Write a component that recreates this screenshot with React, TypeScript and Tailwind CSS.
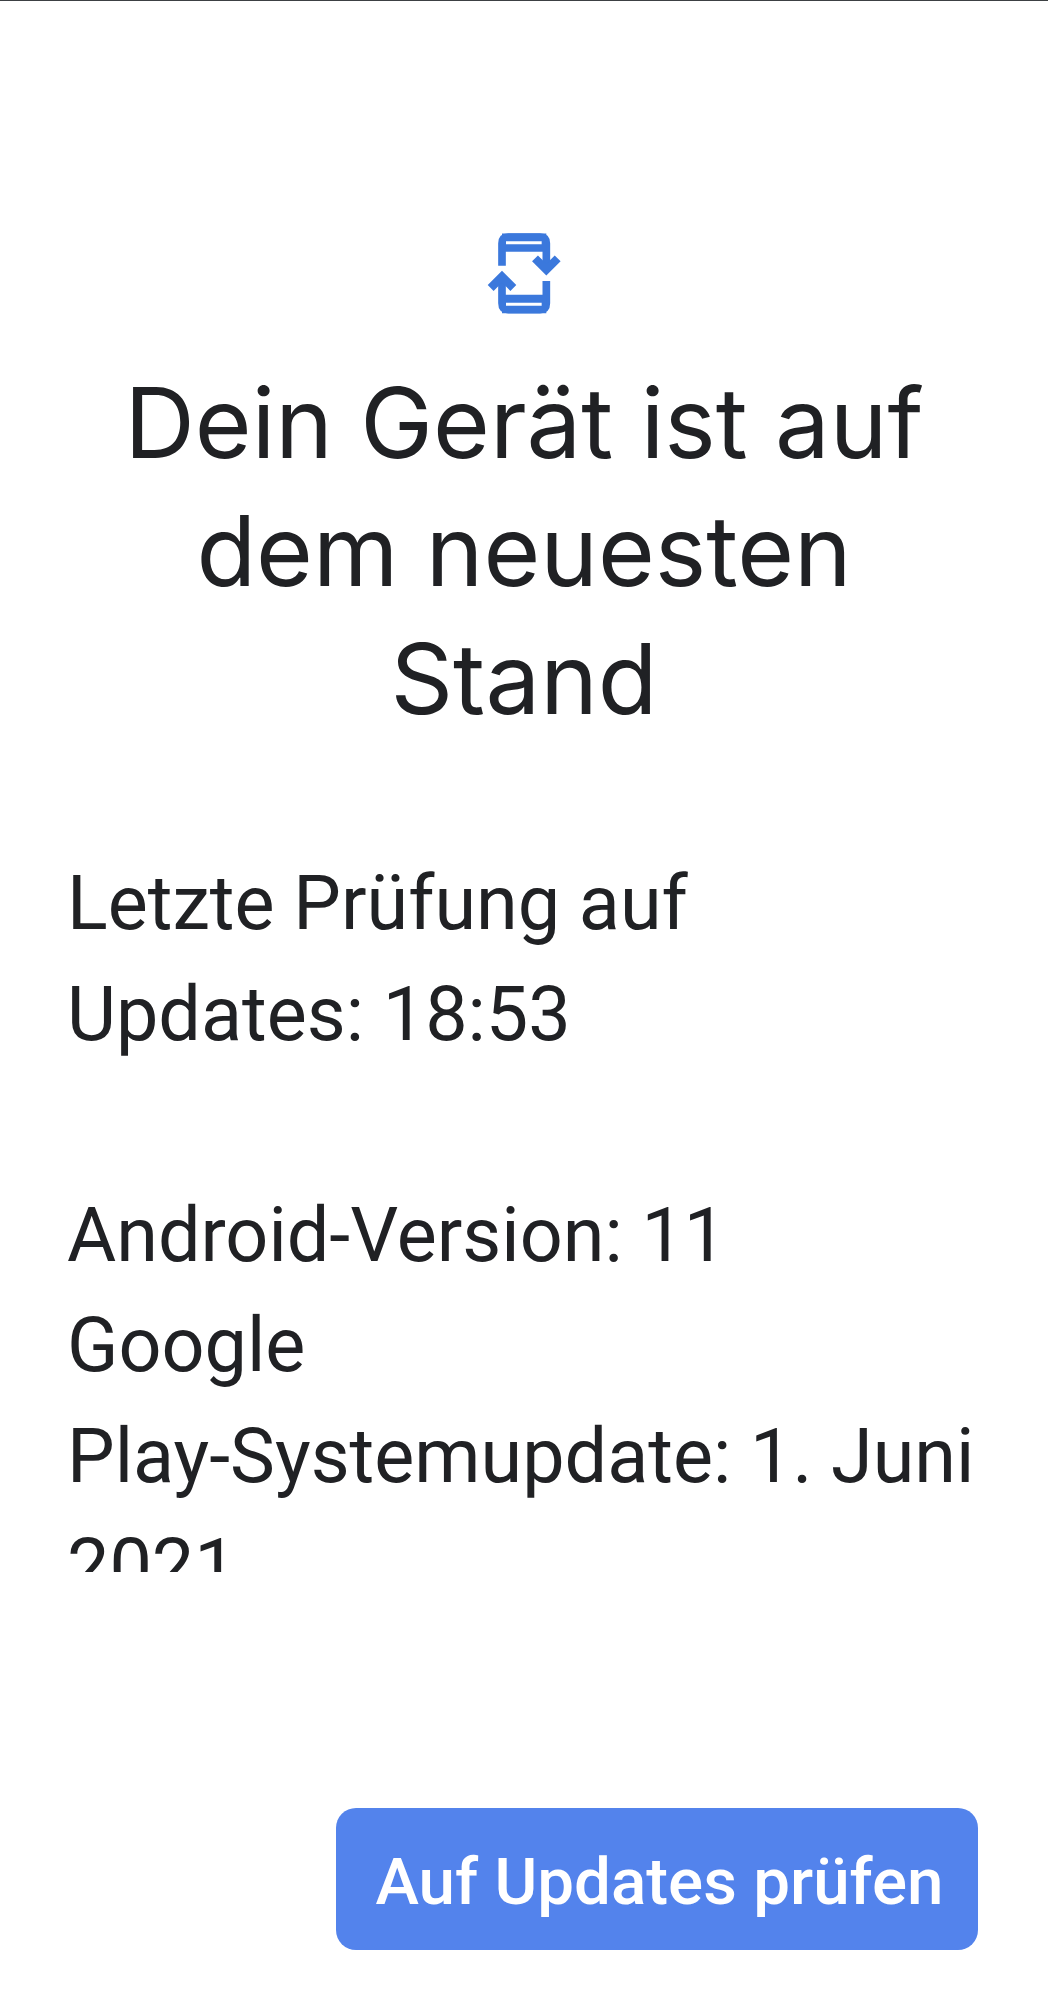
export default function App() {
  return (
    <div className="w-[1048px] h-[2000px] bg-white overflow-hidden flex flex-col font-['Roboto',sans-serif]">
      <div className="h-[1px] w-full bg-[#3c4043] shrink-0" />
      <div className="flex justify-center pt-[209px] shrink-0 pr-[8px]">
        <svg width="120" height="120" viewBox="0 0 360 360" fill="none">
          <g stroke="#3b78dc" strokeWidth="23">
            <path d="M126 167V100Q126 81 145 81H240Q259 81 259 100V172" />
            <path d="M259 213V280Q259 299 240 299H145Q126 299 126 280V208" />
            <path d="M126 98H259" strokeWidth="55" />
            <path d="M126 282H259" strokeWidth="55" />
            <path d="M225 145L259 179L293 145" strokeWidth="25" />
            <path d="M92 234L126 200L160 234" strokeWidth="25" />
          </g>
          <path d="M138 98H245" stroke="#ffffff" strokeWidth="9" />
          <path d="M138 283H245" stroke="#ffffff" strokeWidth="9" />
        </svg>
      </div>
      <h1 className="mt-[29px] mx-auto w-[900px] shrink-0 text-center text-[#202124] text-[97.5px] leading-[128px] font-normal font-['Inter',sans-serif]">
        Dein Gerät ist auf<br />dem neuesten<br />Stand
      </h1>
      <div className="mt-[105px] ml-[67px] w-[930px] h-[724px] shrink-0 overflow-hidden text-[#202124] text-[75.5px] leading-[110.5px]">
        <p>Letzte Prüfung auf</p>
        <p>Updates: 18:53</p>
        <p>&nbsp;</p>
        <p>Android-Version: 11</p>
        <p>Google</p>
        <p>Play-Systemupdate: 1. Juni</p>
        <p>2021</p>
      </div>
      <div className="flex justify-end pr-[70px] mt-[236px] shrink-0">
        <button className="w-[642px] h-[142px] pl-[5px] pt-[7px] rounded-[20px] bg-[#5383ec] text-white text-[65.5px] font-medium flex items-center justify-center">
          Auf Updates prüfen
        </button>
      </div>
    </div>
  );
}
